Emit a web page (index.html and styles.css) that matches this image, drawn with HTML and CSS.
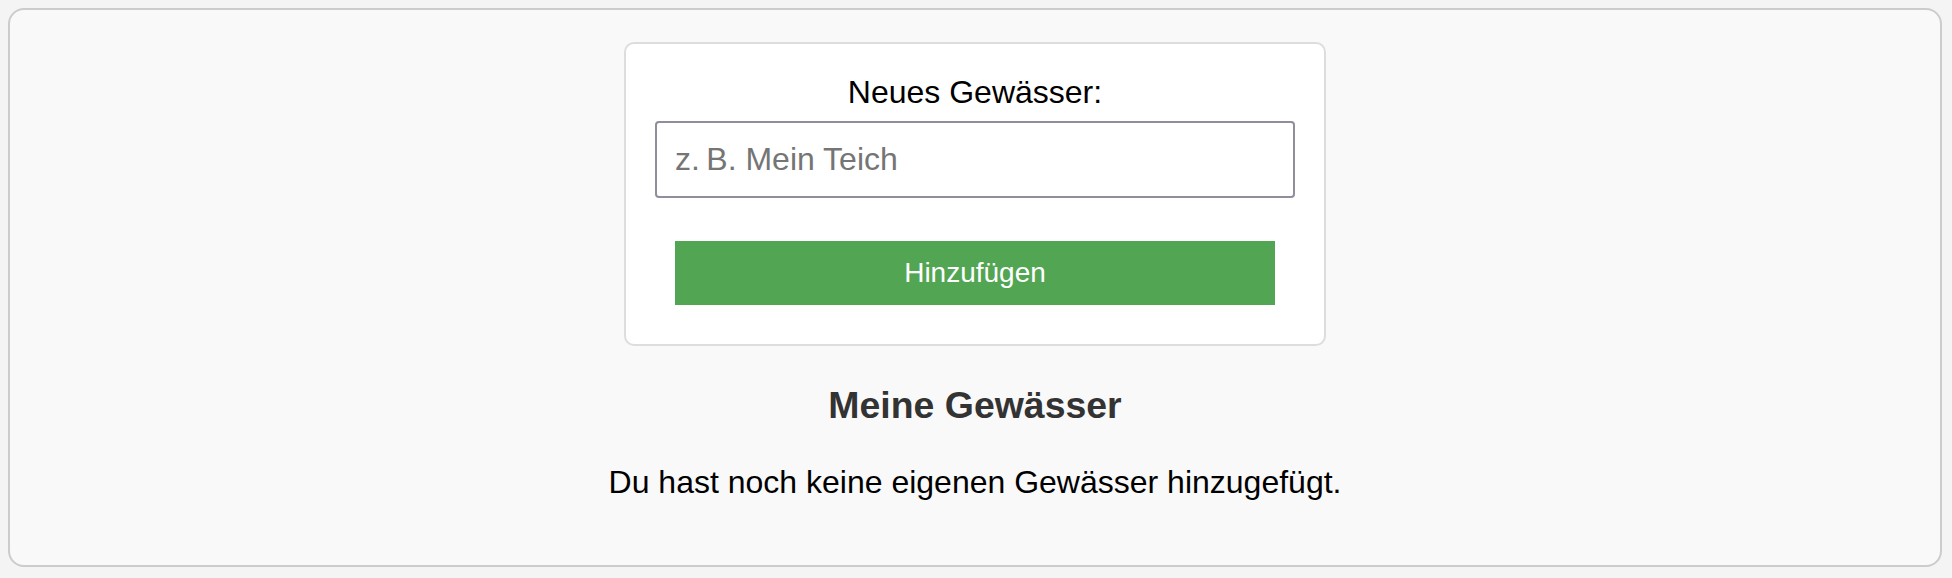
FILE: index.html
```html
<!DOCTYPE html>
<html>
<head>
    <title>Meine Gewässer</title>
	<link rel="stylesheet" href="styles.css">
</head>
<body>
	<div class="container">

		<!-- Neues Gewässer anlegen -->
		<form class="add-form" action="">
			<label for="waterName">Neues Gewässer:</label>
			<input id="waterName" type="text" placeholder="z.&#8201;B. Mein Teich" />
			<button type="button">Hinzufügen</button>
		</form>

		<h3>Meine Gewässer</h3>
		<p class="empty">Du hast noch keine eigenen Gewässer hinzugefügt.</p>

	</div>
</body>
</html>
```

FILE: styles.css
```css
body {
	margin: 0;
	background-color: #f4f4f4;
	font-family: "Liberation Sans", Arial, sans-serif;
	font-size: 32px;
}

.container {
	margin: 8px 10px 10px 8px;
	padding: 32px 30px 32px 30px;
	background-color: #f9f9f9;
	border: 2px solid #cccccc;
	border-radius: 16px;
	text-align: center;
}

.add-form {
	width: 702px;
	box-sizing: border-box;
	margin: 0 auto;
	padding: 30px 29px 39px 29px;
	background-color: #ffffff;
	border: 2px solid #dddddd;
	border-radius: 10px;
}

label {
	display: block;
	margin-bottom: 10px;
	color: #000000;
}

input {
	display: block;
	width: 100%;
	box-sizing: border-box;
	padding: 18px;
	font-family: "Liberation Sans", Arial, sans-serif;
	font-size: 32px;
	border: 2px solid #8e8e9c;
	border-radius: 4px;
	margin: 0;
}

input::placeholder {
	color: #757575;
}

button {
	display: block;
	width: 600px;
	margin: 43px auto 0 auto;
	padding: 16px;
	background-color: #52a552;
	color: #ffffff;
	font-family: "Liberation Sans", Arial, sans-serif;
	font-size: 28px;
	line-height: 32px;
	border: none;
}

h3 {
	font-size: 37.44px;
	color: #333333;
	margin: 38px 0 37px 0;
}

.empty {
	margin: 0 0 32px 0;
}
```
